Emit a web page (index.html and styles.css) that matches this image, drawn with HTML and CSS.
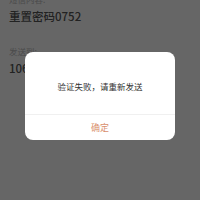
FILE: index.html
```html
<!DOCTYPE html>
<html lang="zh">
<head>
<meta charset="utf-8">
<link rel="stylesheet" href="styles.css">
</head>
<body>
<div class="page">
  <div class="field">
    <div class="label">短信内容:</div>
    <div class="value">重置密码0752</div>
  </div>
  <div class="field">
    <div class="label">发送到:</div>
    <div class="value">10690000</div>
  </div>
</div>
<div class="overlay">
  <div class="dialog">
    <div class="message">验证失败，请重新发送</div>
    <div class="actions">
      <button class="ok">确定</button>
    </div>
  </div>
</div>
</body>
</html>
```
FILE: styles.css
```css
html, body {
  margin: 0;
  padding: 0;
  width: 200px;
  height: 200px;
  overflow: hidden;
  background: #fff;
  font-family: "Noto Sans CJK SC", "Noto Sans", sans-serif;
}
.page {
  display: flex;
  flex-direction: column;
  gap: 21px;
  padding: 0 9px;
  margin-top: -7px;
}
.field {
  display: flex;
  flex-direction: column;
  gap: 3px;
}
.label {
  font-size: 8.5px;
  line-height: 12px;
  color: #bbb;
}
.value {
  font-size: 11.5px;
  line-height: 16px;
  color: #555;
  font-weight: 500;
}
.overlay {
  position: fixed;
  inset: 0;
  background: rgba(0, 0, 0, 0.6);
  display: flex;
  justify-content: center;
  align-items: flex-start;
  padding-top: 52px;
}
.dialog {
  width: 150px;
  background: #fff;
  border-radius: 8px;
  display: flex;
  flex-direction: column;
}
.message {
  height: 62px;
  box-sizing: border-box;
  padding-top: 5px;
  display: flex;
  align-items: center;
  justify-content: center;
  font-size: 8.5px;
  color: #333;
}
.actions {
  border-top: 1px solid #f0f0f0;
  height: 26px;
  box-sizing: border-box;
  display: flex;
}
.ok {
  flex: 1;
  border: 0;
  background: none;
  padding: 0 0 1px;
  font-family: inherit;
  font-size: 9px;
  color: #d98f6c;
}
```
